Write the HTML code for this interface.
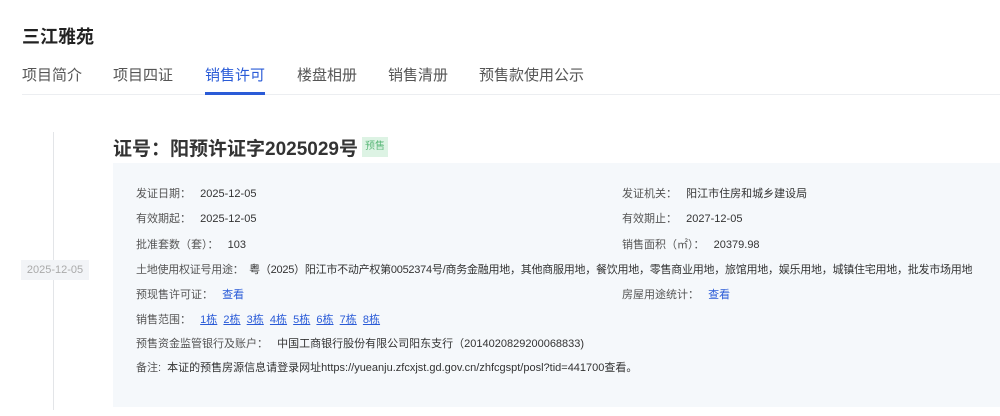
<!DOCTYPE html>
<html><head><meta charset="utf-8"><style>
*{margin:0;padding:0;box-sizing:border-box}
body{width:1000px;height:416px;background:#fff;font-family:"Liberation Sans","Noto Sans CJK SC",sans-serif;position:relative;overflow:hidden;color:#333}
h1{position:absolute;left:22px;top:23px;font-size:18px;font-weight:bold;color:#222}
.tab{position:absolute;top:66px;font-size:15px;color:#555;line-height:20px}
.tab.on{color:#2a5bd7}
.sep{position:absolute;left:22px;right:0;top:94px;height:1px;background:#eceef1}
.ul{position:absolute;left:205px;width:60px;top:92px;height:3px;background:#2a5bd7}
.vline{position:absolute;left:53px;top:132px;width:1px;height:278px;background:#e3e5e8}
.date{position:absolute;left:21px;top:260px;width:68px;height:20px;background:#f2f4f7;color:#aaa;font-size:11px;line-height:20px;text-align:center}
.head{position:absolute;left:113px;top:134px;font-size:19px;font-weight:bold;color:#333}
.tag{position:absolute;left:362px;top:137px;width:26px;height:20px;background:#ddf3e4;color:#5cb87a;font-size:10px;line-height:20px;text-align:center}
.panel{position:absolute;left:113px;top:163px;width:887px;height:244px;background:#f5f8fb}
.r{position:absolute;font-size:11px;white-space:nowrap;line-height:14px;color:#333}
.l{color:#555}
a{color:#2a5bd7;text-decoration:underline}
.b{color:#2a5bd7;text-decoration:none}
</style></head><body>
<h1>三江雅苑</h1>
<div class="tab" style="left:22px">项目简介</div>
<div class="tab" style="left:113px">项目四证</div>
<div class="tab on" style="left:205px">销售许可</div>
<div class="tab" style="left:297px">楼盘相册</div>
<div class="tab" style="left:388px">销售清册</div>
<div class="tab" style="left:479px">预售款使用公示</div>
<div class="sep"></div><div class="ul"></div>
<div class="vline"></div>
<div class="date">2025-12-05</div>
<div class="head">证号：阳预许证字2025029号</div>
<div class="tag">预售</div>
<div class="panel"></div>
<div class="r" style="left:136px;top:187px"><span class="l">发证日期：</span>&nbsp;&nbsp; 2025-12-05</div>
<div class="r" style="left:622px;top:187px"><span class="l">发证机关：</span>&nbsp;&nbsp; 阳江市住房和城乡建设局</div>
<div class="r" style="left:136px;top:212px"><span class="l">有效期起：</span>&nbsp;&nbsp; 2025-12-05</div>
<div class="r" style="left:622px;top:212px"><span class="l">有效期止：</span>&nbsp;&nbsp; 2027-12-05</div>
<div class="r" style="left:136px;top:238px"><span class="l">批准套数（套）：</span>&nbsp;&nbsp; 103</div>
<div class="r" style="left:622px;top:238px"><span class="l">销售面积（㎡）：</span>&nbsp;&nbsp; 20379.98</div>
<div class="r" style="left:136px;top:263px;letter-spacing:-0.25px"><span class="l">土地使用权证号用途：</span>&nbsp; 粤（2025）阳江市不动产权第0052374号/商务金融用地，其他商服用地，餐饮用地，零售商业用地，旅馆用地，娱乐用地，城镇住宅用地，批发市场用地</div>
<div class="r" style="left:136px;top:288px"><span class="l">预现售许可证：</span>&nbsp;&nbsp; <span class="b">查看</span></div>
<div class="r" style="left:622px;top:288px"><span class="l">房屋用途统计：</span>&nbsp;&nbsp; <span class="b">查看</span></div>
<div class="r" style="left:136px;top:313px"><span class="l">销售范围：</span>&nbsp;&nbsp; <a>1栋</a>&nbsp; <a>2栋</a>&nbsp; <a>3栋</a>&nbsp; <a>4栋</a>&nbsp; <a>5栋</a>&nbsp; <a>6栋</a>&nbsp; <a>7栋</a>&nbsp; <a>8栋</a></div>
<div class="r" style="left:136px;top:337px"><span class="l">预售资金监管银行及账户：</span>&nbsp;&nbsp; 中国工商银行股份有限公司阳东支行（2014020829200068833)</div>
<div class="r" style="left:136px;top:361px"><span class="l">备注:</span>&nbsp; 本证的预售房源信息请登录网址https://yueanju.zfcxjst.gd.gov.cn/zhfcgspt/posl?tid=441700查看。</div>
</body></html>
